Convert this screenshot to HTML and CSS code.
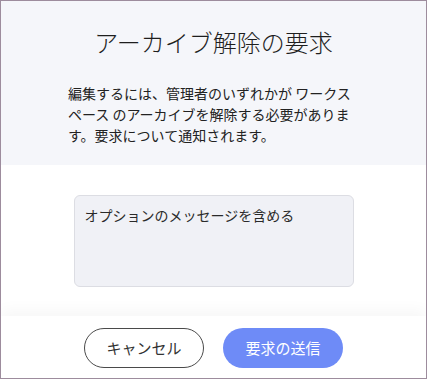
FILE: index.html
```html
<!DOCTYPE html>
<html lang="ja">
<head>
<meta charset="utf-8">
<title>アーカイブ解除の要求</title>
<link rel="stylesheet" href="styles.css">
</head>
<body>
<div class="dialog">
  <header class="dialog-header">
    <h1 class="dialog-title">アーカイブ解除の要求</h1>
    <p class="dialog-text">編集するには、管理者のいずれかが ワークスペース のアーカイブを解除する必要があります。要求について通知されます。</p>
  </header>
  <main class="dialog-body">
    <textarea class="message" placeholder="オプションのメッセージを含める"></textarea>
  </main>
  <footer class="dialog-footer">
    <button class="btn btn-cancel" type="button">キャンセル</button>
    <button class="btn btn-send" type="button">要求の送信</button>
  </footer>
</div>
</body>
</html>
```
FILE: styles.css
```css
* { box-sizing: border-box; }
html, body { margin: 0; padding: 0; background: #fff; }
body {
  font-family: "Noto Sans CJK JP", "Noto Sans", sans-serif;
  color: #222;
}
.dialog {
  width: 427px;
  height: 379px;
  border: 1px solid #9d8c9d;
  display: flex;
  flex-direction: column;
  overflow: hidden;
  background: #fff;
}
.dialog-header {
  background: #f5f6fa;
  padding: 26px 67px 20px;
  height: 164px;
  flex: none;
}
.dialog-title {
  margin: 0;
  font-size: 24px;
  line-height: 30px;
  font-weight: 300;
  text-align: center;
  color: #1e1e1e;
}
.dialog-text {
  margin: 26px 0 0;
  font-size: 14px;
  line-height: 21px;
  color: #222;
}
.dialog-body {
  flex: 1;
  display: flex;
  justify-content: center;
  padding-top: 30px;
}
.message {
  width: 280px;
  height: 92px;
  margin: 0;
  padding: 9px 10px;
  border: 1px solid #dcdde3;
  border-radius: 6px;
  background: #f0f1f6;
  font-family: inherit;
  font-size: 14px;
  line-height: 20px;
  color: #222;
  resize: none;
  outline: none;
}
.message::placeholder { color: #2a2a2a; opacity: 1; }
.dialog-footer {
  flex: none;
  height: 62px;
  padding: 12px 0 0;
  display: flex;
  justify-content: center;
  gap: 19px;
  background: #fff;
  box-shadow: 0 -6px 14px rgba(0, 0, 0, 0.035);
  position: relative;
}
.btn {
  width: 120px;
  height: 40px;
  border-radius: 20px;
  font-family: inherit;
  font-size: 15px;
  line-height: 20px;
  padding: 0;
  cursor: pointer;
}
.btn-cancel {
  background: #fff;
  border: 1px solid #4a4a4a;
  color: #333;
}
.btn-send {
  background: #6e8bf7;
  border: none;
  color: #fff;
}
```
